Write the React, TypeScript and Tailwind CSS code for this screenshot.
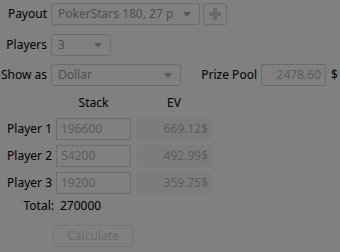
import React from "react";

const font = { fontFamily: '"Noto Sans", "DejaVu Sans", sans-serif' };

function Arrow() {
  return (
    <svg width="8" height="5" viewBox="0 0 8 5" className="shrink-0">
      <path d="M0 0 H8 L4 5 Z" fill="#585858" />
    </svg>
  );
}

function Combo({ w, text }: { w: string; text: string }) {
  return (
    <div
      className={`${w} h-[22px] rounded-[3px] border border-[#6c6c6c] flex items-center pl-[6px] pr-[8px] gap-[4px] overflow-hidden`}
    >
      <span className="flex-1 min-w-0 whitespace-nowrap overflow-x-clip leading-[20px] text-[#4e4e4e]">{text}</span>
      <Arrow />
    </div>
  );
}

function Field({ text }: { text: string }) {
  return (
    <div className="w-[75px] h-[22px] border border-[#6c6c6c] flex items-center pl-[4px] text-[#5c5c5c]">
      {text}
    </div>
  );
}

function EV({ text }: { text: string }) {
  return (
    <div className="w-[74px] h-[22px] bg-[#7c7c7c] flex items-center justify-end pr-[3px] text-[#5c5c5c]">
      {text}
    </div>
  );
}

export default function App() {
  const players = [
    ["Player 1", "196600", "669.12$"],
    ["Player 2", "54200", "492.99$"],
    ["Player 3", "19200", "359.75$"],
  ];
  return (
    <div
      className="w-[340px] h-[252px] bg-[#808080] text-[12px] text-black leading-none whitespace-nowrap overflow-hidden"
      style={font}
    >
      <div className="pt-[3px] flex flex-col">
        <div className="flex items-center h-[22px]">
          <div className="w-[47px] shrink-0 text-right">Payout</div>
          <div className="ml-[4px] shrink-0">
            <Combo w="w-[149px]" text="PokerStars 180, 27 p" />
          </div>
          <div className="ml-[3px] shrink-0 w-[24px] h-[22px] rounded-[3px] border border-[#6c6c6c] flex items-center justify-center">
            <svg width="12" height="12" viewBox="0 0 12 12">
              <path d="M4 0 H8 V4 H12 V8 H8 V12 H4 V8 H0 V4 H4 Z" fill="#6a6a6a" />
            </svg>
          </div>
        </div>
        <div className="flex items-center h-[22px] mt-[9px]">
          <div className="w-[47px] shrink-0 text-right">Players</div>
          <div className="ml-[4px] shrink-0">
            <Combo w="w-[60px]" text="3" />
          </div>
        </div>
        <div className="flex items-center h-[22px] mt-[8px]">
          <div className="w-[47px] shrink-0 text-right">Show as</div>
          <div className="ml-[4px] shrink-0">
            <Combo w="w-[130px]" text="Dollar" />
          </div>
          <div className="w-[76px] shrink-0 text-right">Prize Pool</div>
          <div className="ml-[4px] shrink-0 w-[65px] h-[22px] border border-[#6c6c6c] flex items-center justify-end pr-[4px] text-[#5c5c5c]">
            2478.60
          </div>
          <div className="ml-[5px] shrink-0">$</div>
        </div>
        <div className="flex items-center h-[14px] mt-[10px]">
          <div className="w-[56px] shrink-0" />
          <div className="w-[75px] shrink-0 text-center">Stack</div>
          <div className="w-[6px] shrink-0" />
          <div className="w-[74px] shrink-0 text-center">EV</div>
        </div>
        <div className="flex flex-col gap-[5px] mt-[8px]">
          {players.map(([n, s, e]) => (
            <div key={n} className="flex items-center h-[22px]">
              <div className="w-[52px] shrink-0 text-right">{n}</div>
              <div className="ml-[4px] shrink-0">
                <Field text={s} />
              </div>
              <div className="ml-[6px] shrink-0">
                <EV text={e} />
              </div>
            </div>
          ))}
        </div>
        <div className="flex items-center h-[14px] mt-[5px]">
          <div className="w-[54px] shrink-0 text-right">Total:</div>
          <div className="ml-[6px]">270000</div>
        </div>
        <div className="mt-[12px] ml-[53px] w-[80px] h-[22px] rounded-[3px] border border-[#767676] flex items-center justify-center text-[#6a6a6a]">
          Calculate
        </div>
      </div>
    </div>
  );
}
